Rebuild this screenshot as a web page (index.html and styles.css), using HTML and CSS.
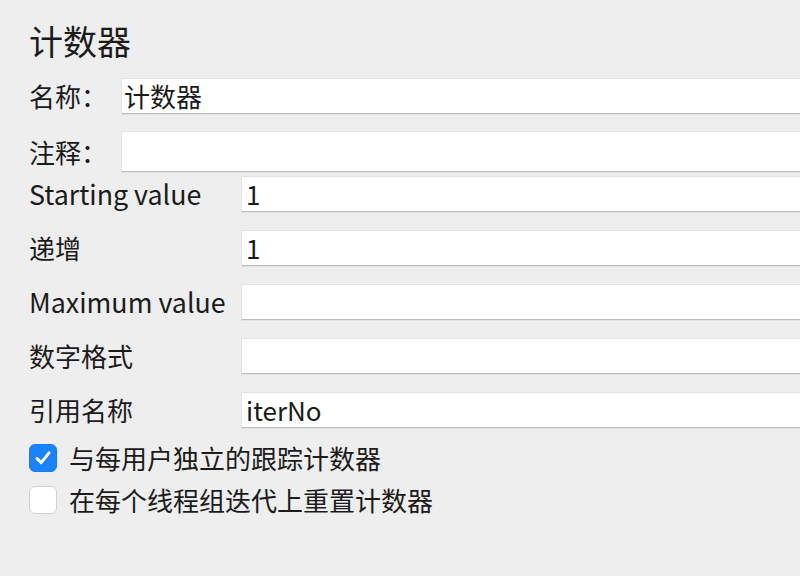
FILE: index.html
```html
<!DOCTYPE html>
<html lang="zh">
<head>
<meta charset="utf-8">
<title>计数器</title>
<link rel="stylesheet" href="styles.css">
</head>
<body>
<div class="page">
  <h1 class="title">计数器</h1>
  <div class="grid grid-top">
    <label class="label">名称：</label>
    <div class="field field-name">计数器</div>
    <label class="label">注释：</label>
    <div class="field field-comment"></div>
  </div>
  <div class="grid grid-counter">
    <label class="label latin">Starting value</label>
    <div class="field">1</div>
    <label class="label">递增</label>
    <div class="field">1</div>
    <label class="label latin">Maximum value</label>
    <div class="field"></div>
    <label class="label">数字格式</label>
    <div class="field"></div>
    <label class="label">引用名称</label>
    <div class="field">iterNo</div>
  </div>
  <div class="checks">
    <div class="check-row">
      <span class="box box-on">
        <svg viewBox="0 0 28 28" width="28" height="28"><path d="M7.5 14.5 L12 19 L20.5 8.5" fill="none" stroke="#fff" stroke-width="3.2" stroke-linecap="round" stroke-linejoin="round"/></svg>
      </span>
      <span class="check-label">与每用户独立的跟踪计数器</span>
    </div>
    <div class="check-row">
      <span class="box"></span>
      <span class="check-label">在每个线程组迭代上重置计数器</span>
    </div>
  </div>
</div>
</body>
</html>
```

FILE: styles.css
```css
html, body {
  margin: 0;
  padding: 0;
  background: #eeeeee;
}
body {
  width: 800px;
  height: 576px;
  overflow: hidden;
  font-family: "Noto Sans CJK SC", "Noto Sans", sans-serif;
  color: #1b1b1b;
}
.page {
  padding-left: 29px;
}
.title {
  margin: 0;
  padding-top: 21px;
  height: 78px;
  box-sizing: border-box;
  font-size: 34px;
  font-weight: 400;
  line-height: 40px;
}
.grid {
  display: grid;
  align-items: center;
}
.grid-top {
  grid-template-columns: 92px 1fr;
  row-gap: 17px;
}
.grid-counter {
  grid-template-columns: 212px 1fr;
  grid-auto-rows: 36px;
  row-gap: 18px;
  margin-top: 4px;
}
.label {
  font-size: 26px;
  line-height: 36px;
  white-space: nowrap;
}
.latin {
  font-size: 26.8px;
}
.field {
  height: 36px;
  box-sizing: border-box;
  background: #ffffff;
  border-top: 1px solid #e3e3e3;
  border-left: 1px solid #e3e3e3;
  border-bottom: 1px solid #bdbdbd;
  box-shadow: 0 1px 0 #e2e2e2;
  padding-left: 4px;
  font-size: 26px;
  line-height: 34px;
}
.field-name {
  padding-left: 2px;
}
.field-comment {
  height: 41px;
}
.checks {
  margin-top: 16px;
  display: flex;
  flex-direction: column;
  gap: 14px;
}
.check-row {
  display: flex;
  align-items: center;
  gap: 12px;
  height: 28px;
}
.box {
  width: 28px;
  height: 28px;
  box-sizing: border-box;
  border-radius: 6px;
  background: #ffffff;
  border: 1px solid #d3d3d3;
  display: flex;
  align-items: center;
  justify-content: center;
}
.box-on {
  background: #1a82fb;
  border-color: #1a7af0;
}
.box svg {
  display: block;
}
.check-label {
  font-size: 26px;
  line-height: 28px;
}
```
